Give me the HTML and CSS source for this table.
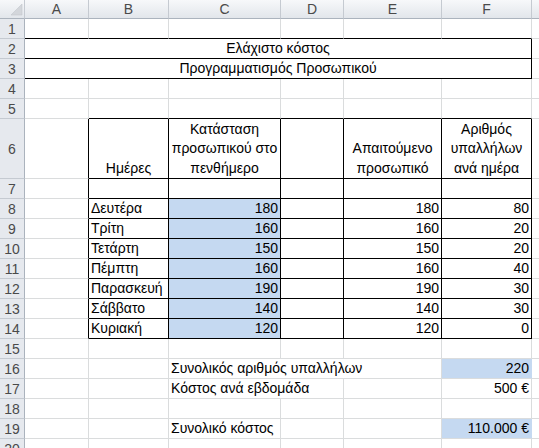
FILE: index.html
```html
<!DOCTYPE html>
<html lang="el">
<head>
<meta charset="utf-8">
<title>Ελάχιστο κόστος</title>
<link rel="stylesheet" href="styles.css">
</head>
<body>
<div class="sheet">
  <div class="ch corner"><svg width="24" height="18" viewBox="0 0 24 18"><polygon points="22,4 22,15 11,15" fill="#d3d6db" stroke="#c3c7cd" stroke-width="0.6"/></svg></div>
  <div class="ch">A</div><div class="ch">B</div><div class="ch">C</div><div class="ch">D</div><div class="ch">E</div><div class="ch">F</div><div class="ch"></div>

  <div class="rh">1</div><div class="bb"></div><div class="bb"></div><div class="bb"></div><div class="bb"></div><div class="bb"></div><div class="bb"></div><div></div>

  <div class="rh">2</div><div class="span6 bb br center">Ελάχιστο κόστος</div><div></div>

  <div class="rh">3</div><div class="span6 bb br center">Προγραμματισμός Προσωπικού</div><div></div>

  <div class="rh">4</div><div></div><div></div><div></div><div></div><div></div><div></div><div></div>

  <div class="rh">5</div><div></div><div class="bb"></div><div class="bb"></div><div class="bb"></div><div class="bb"></div><div class="bb"></div><div></div>

  <div class="rh">6</div><div class="br"></div>
  <div class="bb br hd">Ημέρες</div>
  <div class="bb br hd">Κατάσταση<br>προσωπικού στο<br>πενθήμερο</div>
  <div class="bb br"></div>
  <div class="bb br hd">Απαιτούμενο<br>προσωπικό</div>
  <div class="bb br hd">Αριθμός<br>υπαλλήλων<br>ανά ημέρα</div>
  <div></div>

  <div class="rh">7</div><div class="br"></div><div class="bb br"></div><div class="bb br"></div><div class="bb br"></div><div class="bb br"></div><div class="bb br"></div><div></div>

  <div class="rh">8</div><div class="br"></div><div class="bb br">Δευτέρα</div><div class="bb br fill num">180</div><div class="bb br"></div><div class="bb br num">180</div><div class="bb br num">80</div><div></div>

  <div class="rh">9</div><div class="br"></div><div class="bb br">Τρίτη</div><div class="bb br fill num">160</div><div class="bb br"></div><div class="bb br num">160</div><div class="bb br num">20</div><div></div>

  <div class="rh">10</div><div class="br"></div><div class="bb br">Τετάρτη</div><div class="bb br fill num">150</div><div class="bb br"></div><div class="bb br num">150</div><div class="bb br num">20</div><div></div>

  <div class="rh">11</div><div class="br"></div><div class="bb br">Πέμπτη</div><div class="bb br fill num">160</div><div class="bb br"></div><div class="bb br num">160</div><div class="bb br num">40</div><div></div>

  <div class="rh">12</div><div class="br"></div><div class="bb br">Παρασκευή</div><div class="bb br fill num">190</div><div class="bb br"></div><div class="bb br num">190</div><div class="bb br num">30</div><div></div>

  <div class="rh">13</div><div class="br"></div><div class="bb br">Σάββατο</div><div class="bb br fill num">140</div><div class="bb br"></div><div class="bb br num">140</div><div class="bb br num">30</div><div></div>

  <div class="rh">14</div><div class="br"></div><div class="bb br">Κυριακή</div><div class="bb br fill num">120</div><div class="bb br"></div><div class="bb br num">120</div><div class="bb br num">0</div><div></div>

  <div class="rh">15</div><div></div><div></div><div></div><div></div><div></div><div></div><div></div>

  <div class="rh">16</div><div></div><div></div><div class="span3">Συνολικός αριθμός υπαλλήλων</div><div class="fillcell num">220</div><div></div>

  <div class="rh">17</div><div></div><div></div><div class="span2">Κόστος ανά εβδομάδα</div><div></div><div class="num">500 €</div><div></div>

  <div class="rh">18</div><div></div><div></div><div></div><div></div><div></div><div></div><div></div>

  <div class="rh">19</div><div></div><div></div><div>Συνολικό κόστος</div><div></div><div></div><div class="fillcell num">110.000 €</div><div></div>

  <div class="rh">20</div><div></div><div></div><div></div><div></div><div></div><div></div><div></div>
</div>
</body>
</html>
```

FILE: styles.css
```css
html, body {
  margin: 0;
  padding: 0;
  overflow: hidden;
  background: #ffffff;
}

body {
  font-family: "Liberation Sans", Arial, sans-serif;
  font-size: 14px;
  color: #000000;
}

.sheet {
  display: grid;
  grid-template-columns: 25px 64px 80px 112px 63px 98px 90px 64px;
  grid-template-rows: 19px repeat(5, 20px) 60px repeat(14, 20px);
}

.sheet > * {
  box-sizing: border-box;
  display: flex;
  align-items: flex-end;
  min-width: 0;
  padding: 0 2px 2px 2px;
  line-height: 16px;
  white-space: nowrap;
  border-right: 1px solid #dadcdd;
  border-bottom: 1px solid #dadcdd;
}

.ch {
  background: linear-gradient(#f7f8fa, #e2e6eb);
  border-right-color: #c5cad1;
  border-bottom-color: #abb3bd;
  justify-content: center;
  align-items: center;
  padding: 0;
  color: #4a4a4a;
}

.corner {
  padding: 0;
  align-items: stretch;
  justify-content: flex-start;
}

.rh {
  background: #e6e9ee;
  border-right-color: #abb3bd;
  border-bottom-color: #c5cad1;
  justify-content: center;
  align-items: center;
  padding: 0;
  color: #4a4a4a;
}

.bb {
  border-bottom-color: #000000;
}

.br {
  border-right-color: #000000;
}

.center {
  justify-content: center;
}

.span6 {
  grid-column: span 6;
}

.span3 {
  grid-column: span 3;
}

.span2 {
  grid-column: span 2;
}

.hd {
  justify-content: center;
  text-align: center;
  line-height: 19.5px;
  padding-bottom: 0;
}

.num {
  justify-content: flex-end;
}

.fill {
  background: #c5d9f1;
}

.fillcell {
  background: #c5d9f1;
  border-right-color: #c5d9f1;
}
```
